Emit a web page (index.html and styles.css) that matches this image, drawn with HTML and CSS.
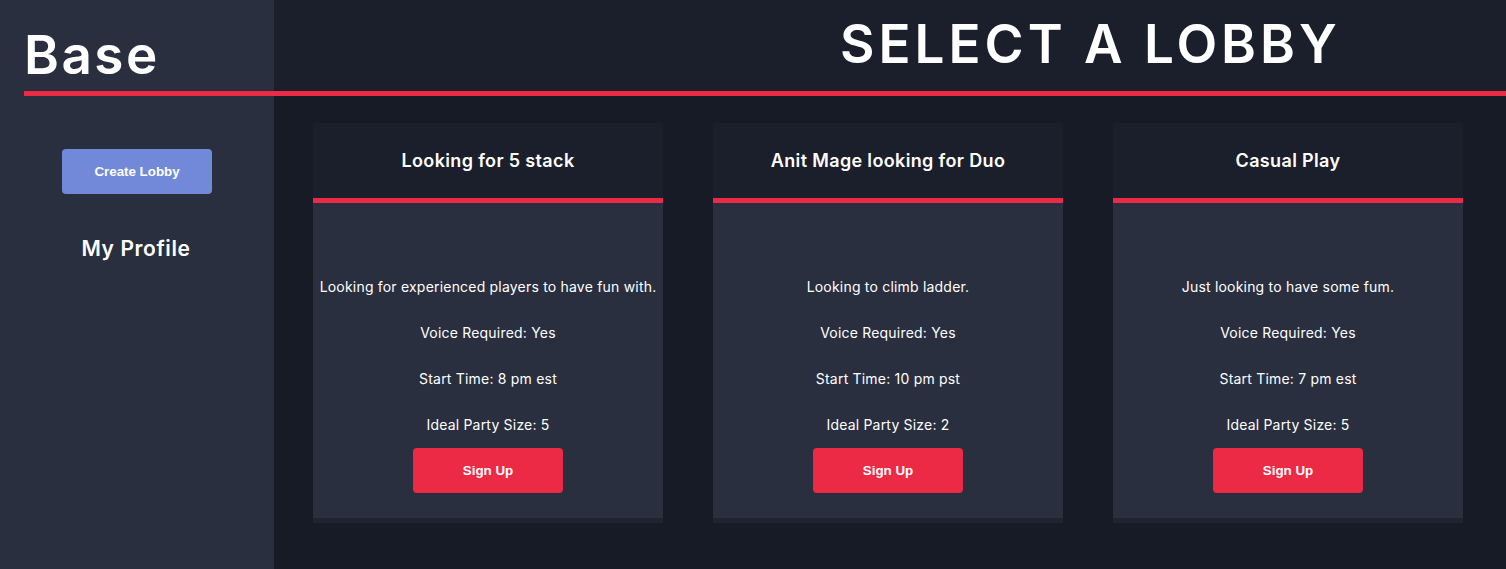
FILE: index.html
```html
<!DOCTYPE html>
<html lang="en">
<head>
<meta charset="utf-8">
<title>Base - Select a Lobby</title>
<link rel="stylesheet" href="styles.css">
</head>
<body>
<div class="app">
  <header class="header">
    <div class="header-inner">
      <div class="brand">Base</div>
      <h1 class="page-title">SELECT A LOBBY</h1>
    </div>
  </header>
  <aside class="sidebar">
    <button class="btn btn-create">Create Lobby</button>
    <div class="profile-link">My Profile</div>
  </aside>
  <main class="main">
    <div class="cards">
      <section class="card">
        <div class="card-head"><h2 class="card-title">Looking for 5 stack</h2></div>
        <div class="card-body">
          <p class="card-line">Looking for experienced players to have fun with.</p>
          <p class="card-line">Voice Required: Yes</p>
          <p class="card-line">Start Time: 8 pm est</p>
          <p class="card-line">Ideal Party Size: 5</p>
          <button class="btn btn-signup">Sign Up</button>
        </div>
      </section>
      <section class="card">
        <div class="card-head"><h2 class="card-title">Anit Mage looking for Duo</h2></div>
        <div class="card-body">
          <p class="card-line">Looking to climb ladder.</p>
          <p class="card-line">Voice Required: Yes</p>
          <p class="card-line">Start Time: 10 pm pst</p>
          <p class="card-line">Ideal Party Size: 2</p>
          <button class="btn btn-signup">Sign Up</button>
        </div>
      </section>
      <section class="card">
        <div class="card-head"><h2 class="card-title">Casual Play</h2></div>
        <div class="card-body">
          <p class="card-line">Just looking to have some fum.</p>
          <p class="card-line">Voice Required: Yes</p>
          <p class="card-line">Start Time: 7 pm est</p>
          <p class="card-line">Ideal Party Size: 5</p>
          <button class="btn btn-signup">Sign Up</button>
        </div>
      </section>
    </div>
  </main>
</div>
</body>
</html>
```

FILE: styles.css
```css
* { box-sizing: border-box; }

html, body {
  margin: 0;
  padding: 0;
  height: 100%;
  background: #171b26;
  color: #ffffff;
  font-family: "Inter", "Noto Sans", sans-serif;
}

.app {
  display: grid;
  grid-template-columns: 274px 1fr;
  grid-template-rows: 96px 1fr;
  min-height: 569px;
}

.header {
  grid-column: 1 / 3;
  grid-row: 1;
  padding-left: 24px;
  background: linear-gradient(to right, #292f3f 274px, #1b1f2b 274px);
}

.header-inner {
  height: 96px;
  display: flex;
  align-items: flex-end;
  border-bottom: 5px solid #ec2a46;
}

.brand {
  width: 250px;
  font-size: 53px;
  font-weight: 600;
  line-height: 1;
  padding-bottom: 9px;
  letter-spacing: 2.5px;
}

.page-title {
  margin: 0 0 0 566px;
  font-size: 53px;
  font-weight: 600;
  line-height: 1;
  padding-bottom: 20px;
  letter-spacing: 4px;
}

.sidebar {
  grid-column: 1;
  grid-row: 2;
  background: #292f3f;
  display: flex;
  flex-direction: column;
  align-items: center;
  padding-top: 53px;
}

.btn {
  border: none;
  border-radius: 4px;
  color: #ffffff;
  font-family: "Liberation Sans", Arial, sans-serif;
  font-size: 13.33px;
  font-weight: 700;
  width: 150px;
  height: 45px;
  cursor: pointer;
}

.btn-create {
  background: #7289da;
}

.profile-link {
  margin-top: 43px;
  margin-left: -2px;
  font-size: 21px;
  font-weight: 600;
  line-height: 24px;
  letter-spacing: 0.6px;
}

.main {
  grid-column: 2;
  grid-row: 2;
  padding: 27px 0 0 39px;
}

.cards {
  display: flex;
  gap: 50px;
}

.card {
  width: 350px;
  background: #292f3f;
  border-bottom: 5px solid #1f2330;
}

.card-head {
  height: 80px;
  background: #1b1f2b;
  border-bottom: 5px solid #ec2a46;
  display: flex;
  align-items: center;
  justify-content: center;
}

.card-title {
  margin: 0;
  font-size: 18px;
  font-weight: 600;
  line-height: 22px;
  letter-spacing: 0.35px;
}

.card-body {
  display: flex;
  flex-direction: column;
  align-items: center;
  padding: 75px 0 25px;
  gap: 28px;
}

.card-line {
  margin: 0;
  font-size: 14px;
  line-height: 18px;
  text-align: center;
  letter-spacing: 0.2px;
}

.btn-signup {
  background: #ec2a46;
  margin-top: -14px;
}
```
